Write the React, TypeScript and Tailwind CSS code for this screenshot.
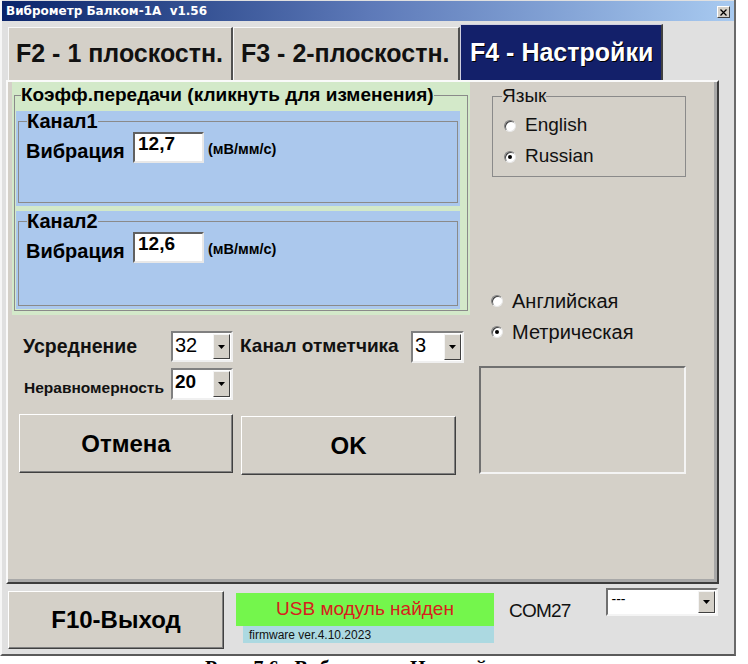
import React from "react";

const F = "font-['Liberation_Sans',Arial,sans-serif]";

function Radio({ checked }: { checked?: boolean }) {
  return (
    <span className="relative inline-flex w-[12px] h-[12px] rounded-full bg-white border border-t-[#808080] border-l-[#808080] border-r-[#e8e8e8] border-b-[#e8e8e8] shadow-[inset_1px_1px_0_#404040] items-center justify-center shrink-0">
      {checked ? <span className="w-[4px] h-[4px] rounded-full bg-black" /> : null}
    </span>
  );
}

function Arrow() {
  return (
    <div className="w-[17px] h-full bg-[#d4d0c8] border border-t-[#f4f4f4] border-l-[#f4f4f4] border-r-[#404040] border-b-[#404040] flex items-center justify-center shrink-0">
      <svg width="7" height="4" viewBox="0 0 7 4">
        <path d="M0 0H7L3.5 4Z" fill="#000" />
      </svg>
    </div>
  );
}

function Combo({ value, w, h, bold, size }: { value: string; w: string; h: string; bold?: boolean; size?: string }) {
  return (
    <div className={`${w} ${h} bg-white border-2 border-t-[#808080] border-l-[#808080] border-r-[#f0f0f0] border-b-[#f0f0f0] flex shrink-0`}>
      <div className={`flex-1 pl-[2px] ${size ?? "text-[20px]"} leading-[22px] pt-[1px] ${bold ? "font-bold" : ""} text-black`}>{value}</div>
      <div className="py-[1px] pr-[1px] h-full">
        <Arrow />
      </div>
    </div>
  );
}

function Field({ value }: { value: string }) {
  return (
    <div className="w-[71px] h-[31px] bg-white border-2 border-t-[#606060] border-l-[#606060] border-r-[#e8e8e8] border-b-[#e8e8e8] pl-[3px] text-[19px] font-bold leading-[20px] text-black">
      {value}
    </div>
  );
}

function Channel({ name, value, h }: { name: string; value: string; h: string }) {
  return (
    <div className={`ml-[1px] w-[444px] ${h} bg-[#abc8ed] pt-[1px] px-[2px]`}>
      <fieldset className="border border-[#8a8a8a] h-[calc(100%-3px)]">
        <legend className="ml-[8px] text-[20px] font-bold leading-[19px] text-black">{name}</legend>
        <div className="flex items-center mt-[1px] pl-[7px]">
          <span className="w-[107px] text-[20px] font-bold text-black leading-[20px] pt-[6px]">Вибрация</span>
          <Field value={value} />
          <span className="ml-[4px] text-[14.5px] font-bold text-black pt-[5px]">(мВ/мм/с)</span>
        </div>
      </fieldset>
    </div>
  );
}

function Btn({ label, w, h, text }: { label: string; w: string; h: string; text?: string }) {
  return (
    <div className={`${w} ${h} bg-[#d4d0c8] border border-t-[#ffffff] border-l-[#ffffff] border-r-[#404040] border-b-[#404040] shadow-[inset_-1px_-1px_0_#808080] flex items-center justify-center shrink-0`}>
      <span className={`${text ?? "text-[24px]"} font-bold text-black`}>{label}</span>
    </div>
  );
}

export default function App() {
  return (
    <div className={`w-[748px] h-[664px] bg-white overflow-hidden ${F}`}>
      <div className="w-[736px] h-[656px] bg-[#e0e0e0] border-l-2 border-l-[#f6f6f6] border-r-2 border-r-[#6a6a6a] border-b-2 border-b-[#5a5a5a] flex flex-col">
        {/* title bar */}
        <div className="h-[20px] mt-[1px] bg-gradient-to-r from-[#0a246a] via-[#5d79b8] to-[#a8caf0] flex items-center justify-between pl-[4px] pr-[4px] shrink-0">
          <span className="font-['DejaVu_Sans',Verdana,sans-serif] text-[12px] font-bold text-white">Виброметр Балком-1А&nbsp;&nbsp;v1.56</span>
          <div className="w-[13px] h-[12px] bg-[#d4d0c8] border border-t-white border-l-white border-r-[#404040] border-b-[#404040] flex items-center justify-center mt-[2px]">
            <svg width="7" height="7" viewBox="0 0 7 7">
              <path d="M0.5 0.5L6.5 6.5M6.5 0.5L0.5 6.5" stroke="#000" strokeWidth="1.3" />
            </svg>
          </div>
        </div>

        {/* tabs */}
        <div className="flex items-end pl-[6px] mt-[4px] h-[55px] shrink-0">
          <div className="w-[225px] h-[53px] bg-[#d4d0c8] border-t border-l border-t-[#f8f8f8] border-l-[#f8f8f8] border-r-2 border-r-[#505050] flex items-center pl-[7px]">
            <span className="text-[25px] font-bold text-[#111] whitespace-nowrap">F2 - 1 плоскостн.</span>
          </div>
          <div className="w-[227px] h-[53px] bg-[#d4d0c8] border-t border-l border-t-[#f8f8f8] border-l-[#f8f8f8] border-r-2 border-r-[#505050] flex items-center pl-[7px]">
            <span className="text-[25px] font-bold text-[#111] whitespace-nowrap">F3 - 2-плоскостн.</span>
          </div>
          <div className="w-[203px] h-[56px] bg-[#13206a] border-t border-l border-t-[#d0d0e0] border-l-[#d0d0e0] border-r-2 border-r-[#404040] flex items-center pl-[9px]">
            <span className="text-[25px] font-bold text-white whitespace-nowrap [text-shadow:1px_1px_0_#000]">F4 - Настройки</span>
          </div>
        </div>

        {/* panel */}
        <div className="ml-[4px] w-[713px] h-[504px] border-2 border-t-[#fafafa] border-l-[#fafafa] border-r-[#3c3c3c] border-b-[#3c3c3c] shrink-0">
          <div className="w-full h-full bg-[#d4d0c8] border-r-[3px] border-b-[3px] border-r-[#a8a8a8] border-b-[#a8a8a8] flex">
            {/* left column */}
            <div className="ml-[4px] w-[458px] flex flex-col shrink-0">
              <div className="h-[233px] bg-[#d3e9c9] pt-[3px] px-[2px]">
                <fieldset className="border border-[#8a8a8a] pb-[1px]">
                  <legend className="ml-[6px] text-[19px] font-bold leading-[20px] text-black whitespace-nowrap">Коэфф.передачи (кликнуть для изменения)</legend>
                  <div className="mt-[6px]">
                    <Channel name="Канал1" value="12,7" h="h-[95px]" />
                  </div>
                  <div className="mt-[5px]">
                    <Channel name="Канал2" value="12,6" h="h-[98px]" />
                  </div>
                </fieldset>
              </div>

              <div className="flex items-center mt-[16px] pl-[11px] h-[31px]">
                <span className="w-[148px] text-[19.5px] font-bold text-[#111]">Усреднение</span>
                <Combo value="32" w="w-[62px]" h="h-[31px]" />
                <span className="ml-[7px] w-[171px] text-[19px] font-bold text-[#111] whitespace-nowrap">Канал отметчика</span>
                <Combo value="3" w="w-[53px]" h="h-[32px]" />
              </div>
              <div className="flex items-center mt-[6px] pl-[12px] h-[32px]">
                <span className="w-[147px] text-[15.5px] font-bold text-[#111] pt-[8px] whitespace-nowrap">Неравномерность</span>
                <Combo value="20" w="w-[62px]" h="h-[32px]" bold size="text-[19px]" />
              </div>
              <div className="flex items-start mt-[14px] pl-[7px]">
                <Btn label="Отмена" w="w-[214px]" h="h-[59px]" />
                <div className="ml-[8px] mt-[2px]">
                  <Btn label="OK" w="w-[215px]" h="h-[59px]" />
                </div>
              </div>
            </div>

            {/* right column */}
            <div className="flex-1 flex flex-col">
              <fieldset className="ml-[22px] mt-[5px] w-[194px] border border-[#8a8a8a] pb-[4px]">
                <legend className="ml-[9px] text-[19px] leading-[18px] text-[#111]">Язык</legend>
                <div className="mt-[5px] h-[31px] flex items-center gap-[9px] pl-[11px]">
                  <Radio />
                  <span className="text-[19px] text-[#111]">English</span>
                </div>
                <div className="h-[31px] flex items-center gap-[9px] pl-[11px]">
                  <Radio checked />
                  <span className="text-[19px] text-[#111]">Russian</span>
                </div>
              </fieldset>

              <div className="ml-[21px] mt-[108px] h-[31px] flex items-center gap-[9px]">
                <Radio />
                <span className="text-[20px] text-[#111]">Английская</span>
              </div>
              <div className="ml-[21px] h-[31px] flex items-center gap-[9px]">
                <Radio checked />
                <span className="text-[20px] text-[#111]">Метрическая</span>
              </div>

              <div className="ml-[9px] mt-[19px] w-[207px] h-[108px] border-2 border-t-[#707070] border-l-[#707070] border-r-[#f4f4f4] border-b-[#f4f4f4]" />
            </div>
          </div>
        </div>

        {/* bottom */}
        <div className="flex items-start pl-[6px] mt-[4px]">
          <div className="mt-[3px]">
            <Btn label="F10-Выход" w="w-[216px]" h="h-[58px]" />
          </div>
          <div className="ml-[12px] mt-[5px] w-[258px] flex flex-col">
            <div className="h-[33px] bg-[#74f64c] flex items-center justify-center">
              <span className="text-[19px] text-[#d8201c]">USB модуль найден</span>
            </div>
            <div className="ml-[7px] h-[17px] bg-[#acd9e1] pl-[6px] flex items-center">
              <span className="text-[12px] text-[#111]">firmware ver.4.10.2023</span>
            </div>
          </div>
          <span className="ml-[15px] mt-[9px] text-[19px] text-[#111] tracking-[-0.8px]">COM27</span>
          <div className="ml-[36px] w-[112px] h-[28px] bg-white border-2 border-t-[#707070] border-l-[#707070] border-r-[#f4f4f4] border-b-[#f4f4f4] flex">
            <div className="flex-1 pl-[3px] text-[14px] leading-[16px] pt-[1px] text-black">---</div>
            <div className="py-[1px] pr-[1px] h-full">
              <Arrow />
            </div>
          </div>
        </div>
      </div>
      <div className="mt-[1px] pl-[205px] font-['Liberation_Serif',serif] font-bold text-[20px] leading-[22px] text-black whitespace-nowrap [word-spacing:6px]">
        Рис. 7.6. Виброметр. Настройки
      </div>
    </div>
  );
}
